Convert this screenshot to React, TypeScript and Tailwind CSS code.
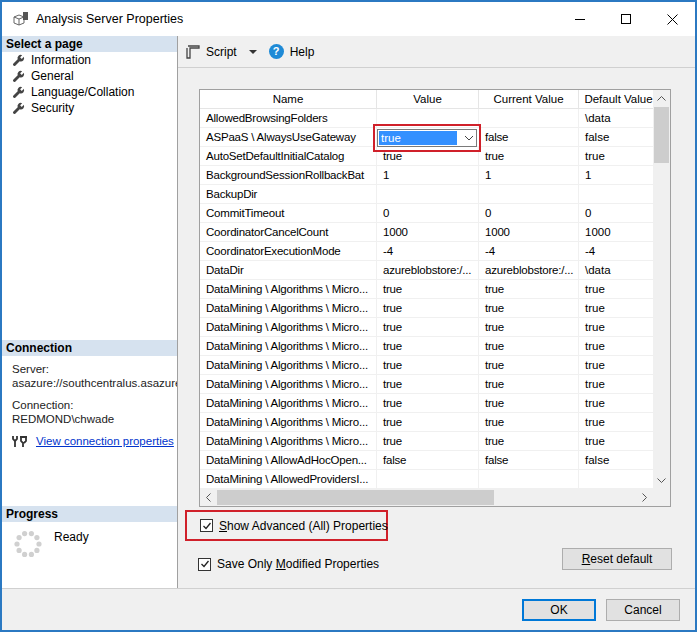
import React from "react";

const rows: [string, string, string, string][] = [
  ["AllowedBrowsingFolders", "", "", "\\data"],
  ["ASPaaS \\ AlwaysUseGateway", "__DD__", "false", "false"],
  ["AutoSetDefaultInitialCatalog", "true", "true", "true"],
  ["BackgroundSessionRollbackBat", "1", "1", "1"],
  ["BackupDir", "", "", ""],
  ["CommitTimeout", "0", "0", "0"],
  ["CoordinatorCancelCount", "1000", "1000", "1000"],
  ["CoordinatorExecutionMode", "-4", "-4", "-4"],
  ["DataDir", "azureblobstore:/...", "azureblobstore:/...", "\\data"],
  ...Array.from({ length: 9 }, () => ["DataMining \\ Algorithms \\ Micro...", "true", "true", "true"] as [string, string, string, string]),
  ["DataMining \\ AllowAdHocOpen...", "false", "false", "false"],
  ["DataMining \\ AllowedProvidersI...", "", "", ""],
];

const Wrench = () => (
  <svg width="13" height="13" viewBox="0 0 16 16" className="shrink-0">
    <path d="M14.5 3.5 12 6 10 4l2.5-2.5A4 4 0 0 0 7 6.5L1.5 12a1.8 1.8 0 0 0 2.5 2.5L9.5 9a4 4 0 0 0 5-5.5z" fill="#444" />
  </svg>
);

const Check = () => (
  <div className="w-[13px] h-[13px] border border-[#333] bg-white flex items-center justify-center shrink-0">
    <svg width="10" height="10" viewBox="0 0 10 10"><path d="M1.5 5 4 7.5 8.5 2" stroke="#222" strokeWidth="1.3" fill="none" /></svg>
  </div>
);

export default function App() {
  return (
    <div className="w-[697px] h-[632px] border-2 border-[#2b79c2] bg-white flex flex-col text-[12px] text-[#000]" style={{ fontFamily: '"Liberation Sans", Arial, sans-serif' }}>
      <div className="h-[34px] flex items-center shrink-0">
        <svg width="18" height="16" viewBox="0 0 18 16" className="ml-[10px]">
          <path d="M2 6 7 4 12 6 12 12 7 14 2 12Z" fill="none" stroke="#666" />
          <path d="M2 6 7 8 12 6M7 8v6" fill="none" stroke="#666" />
          <rect x="11" y="1" width="5" height="8" fill="#555" />
        </svg>
        <span className="ml-[6px] text-[12.5px]">Analysis Server Properties</span>
        <div className="ml-auto flex items-center">
          <span className="w-[46px] flex justify-center"><span className="w-[10px] h-px bg-black" /></span>
          <span className="w-[46px] flex justify-center"><span className="w-[10px] h-[10px] border border-black" /></span>
          <span className="w-[46px] flex justify-center">
            <svg width="11" height="11" viewBox="0 0 11 11"><path d="M0.5 0.5l10 10M10.5 0.5l-10 10" stroke="#000" /></svg>
          </span>
        </div>
      </div>
      <div className="flex flex-1 min-h-0">
        <div className="w-[176px] shrink-0 border-r border-[#a0a0a0] flex flex-col bg-white">
          <div className="h-[16px] bg-[#d6e2ef] font-bold px-[4px] leading-[16px]">Select a page</div>
          {["Information", "General", "Language/Collation", "Security"].map((t) => (
            <div key={t} className="h-[16px] flex items-center gap-[6px] pl-[10px]"><Wrench />{t}</div>
          ))}
          <div className="flex-1" />
          <div className="h-[16px] bg-[#d6e2ef] font-bold px-[4px] leading-[16px]">Connection</div>
          <div className="px-[10px] pt-[6px] leading-[14px] text-[#222] text-[11.5px] whitespace-nowrap overflow-hidden">
            <div>Server:</div>
            <div>asazure://southcentralus.asazure.windows.net</div>
            <div className="mt-[8px]">Connection:</div>
            <div>REDMOND\chwade</div>
            <div className="mt-[8px] flex items-center gap-[8px]">
              <svg width="16" height="13" viewBox="0 0 16 13" className="shrink-0">
                <path d="M1 1v3l2 2v6M5 1v3L3 6" stroke="#333" strokeWidth="1.8" fill="none" />
                <rect x="8" y="1" width="7" height="2" fill="#333" />
                <path d="M9 3v3l2 2v4M14 3v3l-2 2" stroke="#333" strokeWidth="1.8" fill="none" />
              </svg>
              <span className="text-[#0033cc] underline">View connection properties</span>
            </div>
          </div>
          <div className="h-[52px]" />
          <div className="h-[16px] bg-[#d6e2ef] font-bold px-[4px] leading-[16px] mt-[6px]">Progress</div>
          <div className="flex pl-[12px] pt-[8px] h-[66px]">
            <svg width="28" height="28" viewBox="0 0 28 28">
              {Array.from({ length: 10 }, (_, i) => {
                const a = (i * Math.PI) / 5;
                return <circle key={i} cx={14 + 11 * Math.cos(a)} cy={14 + 11 * Math.sin(a)} r="2.6" fill="#d0d0d0" />;
              })}
            </svg>
            <span className="ml-[12px] mt-[-2px]">Ready</span>
          </div>
        </div>
        <div className="flex-1 bg-[#f0f0f0] flex flex-col">
          <div className="h-[32px] flex items-center border-b border-[#d0d0d0] pl-[8px] gap-[6px]">
            <svg width="14" height="14" viewBox="0 0 14 14"><path d="M2 1h11v2H4v10H1V3" fill="none" stroke="#444" strokeWidth="1.3" /></svg>
            <span>Script</span>
            <span className="ml-[6px] w-0 h-0 border-l-[4px] border-r-[4px] border-t-[4px] border-l-transparent border-r-transparent border-t-[#333]" />
            <span className="ml-[6px] w-[15px] h-[15px] rounded-full bg-[#1e8ad6] text-white font-bold text-[11px] flex items-center justify-center">?</span>
            <span>Help</span>
          </div>
          <div className="ml-[21px] mt-[21px] w-[472px] h-[418px] border border-[#a0a0a0] bg-white flex flex-col text-[11.5px]">
            <div className="flex flex-1 min-h-0">
              <div className="flex-1 overflow-hidden">
                <div className="flex h-[19px] border-b border-[#e5e5e5]">
                  {[["Name", 177], ["Value", 102], ["Current Value", 100], ["Default Value", 80]].map(([t, w]) => (
                    <div key={t as string} style={{ width: w as number }} className="shrink-0 border-r border-[#e5e5e5] text-center leading-[18px] whitespace-nowrap overflow-hidden">{t}</div>
                  ))}
                </div>
                {rows.map((r, i) => (
                  <div key={i} className="flex h-[19px] border-b border-[#f0f0f0] leading-[18px] whitespace-nowrap">
                    <div className="w-[177px] shrink-0 pl-[6px] border-r border-[#f0f0f0] overflow-hidden text-clip tracking-[-0.2px]">{r[0]}</div>
                    {r[1] === "__DD__" ? (
                      <div className="w-[102px] shrink-0 relative">
                        <div className="absolute left-[-4px] top-[-4px] w-[108px] h-[28px] border-2 border-[#d0202a] z-10 flex items-center px-[2px]">
                          <div className="w-full h-[18px] border border-[#7a7a7a] bg-white flex items-center p-[1px]">
                            <div className="bg-[#3390ff] text-white h-full w-[78px] px-[2px] leading-[15px]">true</div>
                            <svg className="ml-[7px]" width="10" height="6" viewBox="0 0 10 6"><path d="M1 1l4 4 4-4" stroke="#444" fill="none" /></svg>
                          </div>
                        </div>
                      </div>
                    ) : (
                      <div className="w-[102px] shrink-0 pl-[6px] border-r border-[#f0f0f0] overflow-hidden tracking-[-0.2px]">{r[1]}</div>
                    )}
                    <div className="w-[100px] shrink-0 pl-[6px] border-r border-[#f0f0f0] overflow-hidden tracking-[-0.2px]">{r[2]}</div>
                    <div className="w-[80px] shrink-0 pl-[6px] overflow-hidden">{r[3]}</div>
                  </div>
                ))}
              </div>
              <div className="w-[17px] bg-[#f0f0f0] flex flex-col items-center">
                <svg className="my-[6px]" width="9" height="5" viewBox="0 0 9 5"><path d="M0.5 4.5l4-4 4 4" stroke="#555" fill="none" /></svg>
                <div className="w-[15px] h-[56px] bg-[#cdcdcd]" />
                <div className="flex-1" />
                <svg className="my-[6px]" width="9" height="5" viewBox="0 0 9 5"><path d="M0.5 0.5l4 4 4-4" stroke="#555" fill="none" /></svg>
              </div>
            </div>
            <div className="h-[17px] bg-[#f0f0f0] flex items-center shrink-0">
              <span className="w-[17px] flex justify-center"><svg width="5" height="9" viewBox="0 0 5 9"><path d="M4.5 0.5l-4 4 4 4" stroke="#555" fill="none" /></svg></span>
              <div className="w-[277px] h-[15px] bg-[#cdcdcd]" />
              <div className="flex-1" />
              <span className="w-[17px] flex justify-center mr-[17px]"><svg width="5" height="9" viewBox="0 0 5 9"><path d="M0.5 0.5l4 4-4 4" stroke="#555" fill="none" /></svg></span>
            </div>
          </div>
          <div className="ml-[7px] mt-[3px] w-[203px] h-[31px] border-2 border-[#d0202a] flex items-center pl-[13px] gap-[6px] whitespace-nowrap">
            <Check /><span><u>S</u>how Advanced (All) Properties</span>
          </div>
          <div className="flex items-center mt-[4px] pl-[20px] pr-[23px] whitespace-nowrap">
            <div className="flex items-center gap-[6px] mt-[10px]"><Check /><span>Save Only <u>M</u>odified Properties</span></div>
            <div className="ml-auto w-[110px] h-[22px] border border-[#adadad] bg-[#e1e1e1] flex items-center justify-center"><u>R</u>eset default</div>
          </div>
          <div className="flex-1" />
        </div>
      </div>
      <div className="h-[42px] shrink-0 border-t border-[#d0d0d0] bg-[#f0f0f0] flex items-center justify-end gap-[10px] pr-[15px]">
        <div className="w-[74px] h-[22px] border-2 border-[#0078d7] bg-[#e1e1e1] flex items-center justify-center">OK</div>
        <div className="w-[74px] h-[22px] border border-[#adadad] bg-[#e1e1e1] flex items-center justify-center">Cancel</div>
      </div>
    </div>
  );
}
